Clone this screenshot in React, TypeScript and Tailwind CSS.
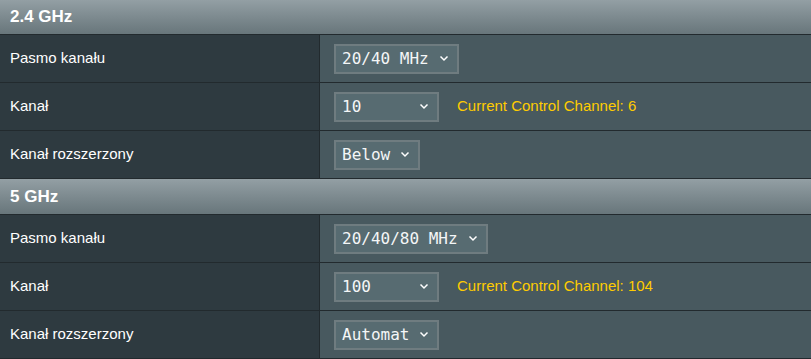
import React from "react";

function Chevron() {
  return (
    <svg width="10" height="7" viewBox="0 0 10 7" className="shrink-0">
      <path d="M1.5 1.5 L5 5 L8.5 1.5" fill="none" stroke="#ffffff" strokeWidth="1.5" />
    </svg>
  );
}

function Select({ value, width }: { value: string; width: string }) {
  return (
    <div
      className={`flex h-[30px] items-center justify-between border-2 border-[#6f7c80] bg-[#576b71] pl-[6px] pr-[8px] text-[16px] text-[#f4f6f7] ${width}`}
      style={{ fontFamily: '"DejaVu Sans Mono", "Liberation Mono", monospace' }}
    >
      <span>{value}</span>
      <Chevron />
    </div>
  );
}

function Header({ title, h }: { title: string; h: string }) {
  return (
    <div
      className={`flex items-center border-b border-[#222a2e] bg-gradient-to-b from-[#939fa4] to-[#68767b] pl-[10px] text-[17px] font-bold text-white ${h}`}
    >
      {title}
    </div>
  );
}

function Row({ label, children }: { label: string; children: React.ReactNode }) {
  return (
    <div className="flex h-[48px] border-b border-[#222a2e]">
      <div className="flex w-[320px] items-center border-r border-[#222a2e] bg-[#2e3a40] pl-[10px] text-[15px] text-white">
        {label}
      </div>
      <div className="flex flex-1 items-center bg-[#48595f] pl-[14px]">{children}</div>
    </div>
  );
}

export default function App() {
  return (
    <div
      className="h-[359px] w-[811px] overflow-hidden bg-[#48595f]"
      style={{ fontFamily: '"Liberation Sans", Arial, sans-serif' }}
    >
      <Header title="2.4 GHz" h="h-[35px]" />
      <Row label="Pasmo kanału">
        <Select value="20/40 MHz" width="w-[125px]" />
      </Row>
      <Row label="Kanał">
        <Select value="10" width="w-[105px]" />
        <span className="ml-[18px] text-[15px] text-[#ffcc00]">Current Control Channel: 6</span>
      </Row>
      <Row label="Kanał rozszerzony">
        <Select value="Below" width="w-[86px]" />
      </Row>
      <Header title="5 GHz" h="h-[36px]" />
      <Row label="Pasmo kanału">
        <Select value="20/40/80 MHz" width="w-[154px]" />
      </Row>
      <Row label="Kanał">
        <Select value="100" width="w-[105px]" />
        <span className="ml-[18px] text-[15px] text-[#ffcc00]">Current Control Channel: 104</span>
      </Row>
      <Row label="Kanał rozszerzony">
        <Select value="Automat" width="w-[105px]" />
      </Row>
    </div>
  );
}
